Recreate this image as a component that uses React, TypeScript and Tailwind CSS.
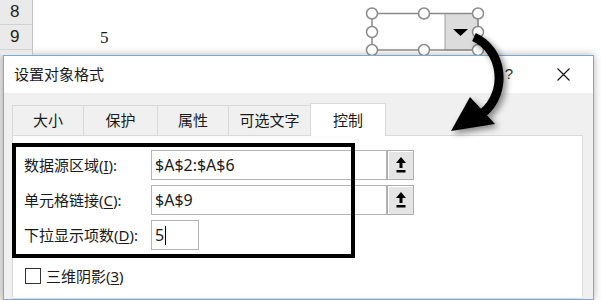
const cjk = "font-['Noto_Sans','Noto_Sans_CJK_SC',sans-serif]"

function Key({ k }: { k: string }) {
  return <span className="underline underline-offset-2">{k}</span>
}

function UploadButton() {
  return (
    <div className="flex h-[30px] w-[27px] items-center justify-center border border-[#adadad] bg-[#e5e5e5] shadow-[inset_1px_1px_0_#fff]">
      <svg width="10" height="16" viewBox="0 0 10 16">
        <polygon points="5,0 10,6 0,6" fill="#000" />
        <rect x="3.5" y="5" width="3" height="6" fill="#000" />
        <rect x="0.5" y="13" width="9" height="2.5" fill="#000" />
      </svg>
    </div>
  )
}

function Tab({ label, width, active }: { label: string; width: string; active?: boolean }) {
  return (
    <div
      className={`flex items-center justify-center border-[#d9d9d9] ${width} ${
        active
          ? 'relative z-10 -mb-px h-[33px] border-x border-t bg-white'
          : 'h-[30px] border-l border-t bg-[#f0f0f0]'
      }`}
    >
      {label}
    </div>
  )
}

export default function App() {
  return (
    <div className={`relative h-[300px] w-[601px] overflow-hidden bg-white text-[15px] text-[#1a1a1a] ${cjk}`}>
      {/* spreadsheet behind the dialog */}
      <div className="relative flex h-[55px] overflow-hidden">
        <div className="w-[33px] shrink-0 border-r border-[#c4c4c4] bg-[#eaeaea] font-['Liberation_Sans',sans-serif] text-[17px] text-[#222]">
          <div className="flex h-[25px] items-center border-b border-[#d2d2d2] pl-[10px]">8</div>
          <div className="flex h-[25px] items-center border-b border-[#d2d2d2] pl-[10px]">9</div>
          <div className="h-[5px]" />
        </div>
        <div className="flex-1 pt-[25px]">
          <div className="flex h-[25px] items-center pl-[67px] font-['Liberation_Serif',serif] text-[17px]">5</div>
        </div>
        {/* combo box form control, selected */}
        <svg className="absolute left-[360px] top-0" width="130" height="60" viewBox="360 0 130 60">
          <rect x="445" y="13.5" width="33" height="36.5" fill="#dcdcdc" stroke="#a0a0a0" />
          <polygon points="453,29 468,29 460.5,36" fill="#000" />
          <rect x="372" y="13.5" width="106" height="36.5" fill="none" stroke="#8a8a8a" strokeWidth="1.5" />
          {[
            [372, 13.5], [424, 13.5], [478, 13.5],
            [372, 32], [478, 32],
            [372, 50], [424, 50], [478, 50],
          ].map(([cx, cy], i) => (
            <circle key={i} cx={cx} cy={cy} r="5.5" fill="#fff" stroke="#8a8a8a" strokeWidth="1.5" />
          ))}
        </svg>
      </div>

      <div className="flex h-[245px]">
        <div className="w-[3px] shrink-0 bg-[#eaeaea]" />
        {/* dialog window */}
        <div className="flex w-[591px] flex-col border border-[#7fa9d4] shadow-[0_0_8px_rgba(0,0,0,0.3)]">
          <div className="flex h-[37px] shrink-0 items-center bg-white pl-[10px] pr-[23px]">
            <span>设置对象格式</span>
            <span className="ml-auto font-['Liberation_Sans',sans-serif] text-[15px] text-[#333]">?</span>
            <svg className="ml-[44px]" width="13" height="13" viewBox="0 0 13 13">
              <path d="M0.5 0.5 L12.5 12.5 M12.5 0.5 L0.5 12.5" stroke="#111" strokeWidth="1.1" />
            </svg>
          </div>
          <div className="flex flex-1 flex-col bg-[#f0f0f0] pl-[8px] pr-[10px] pt-[10px]">
            <div className="flex items-end">
              <Tab label="大小" width="w-[71px]" />
              <Tab label="保护" width="w-[74px]" />
              <Tab label="属性" width="w-[71px]" />
              <Tab label="可选文字" width="w-[82px]" />
              <Tab label="控制" width="w-[76px]" active />
            </div>
            <div className="relative flex-1 border border-[#d9d9d9] bg-white pl-[11px] pt-[14px]">
              <div className="mb-[5px] flex h-[30px] items-center">
                <div className="w-[127px]">
                  数据源区域(<Key k="I" />):
                </div>
                <div className="flex h-[30px] w-[236px] items-center border border-[#b4b4b4] pl-[3px] text-[16px]">$A$2:$A$6</div>
                <UploadButton />
              </div>
              <div className="mb-[5px] flex h-[30px] items-center">
                <div className="w-[127px]">
                  单元格链接(<Key k="C" />):
                </div>
                <div className="flex h-[30px] w-[236px] items-center border border-[#b4b4b4] pl-[3px] text-[16px]">$A$9</div>
                <UploadButton />
              </div>
              <div className="flex h-[30px] items-center">
                <div className="w-[127px]">
                  下拉显示项数(<Key k="D" />):
                </div>
                <div className="flex h-[30px] w-[48px] items-center border border-[#b4b4b4] pl-[3px] text-[16px]">
                  5<span className="ml-px h-[19px] w-px bg-black" />
                </div>
              </div>
              <div className="mt-[18px] flex h-[16px] items-center">
                <div className="ml-px mr-[5px] h-[16px] w-[16px] border border-[#333]" />
                <span>
                  三维阴影(<Key k="3" />)
                </span>
              </div>
              {/* highlight frame drawn over the screenshot */}
              <div className="absolute left-[-1px] top-[7px] h-[115px] w-[343px] border-4 border-black" />
            </div>
          </div>
        </div>
      </div>

      {/* annotation arrow */}
      <svg
        className="pointer-events-none absolute left-0 top-0 drop-shadow-[3px_3px_3px_rgba(0,0,0,0.45)]"
        width="601"
        height="300"
        viewBox="0 0 601 300"
      >
        <path d="M474 37 C503 50 508 92 483 113" fill="none" stroke="#000" strokeWidth="9" />
        <polygon points="451,131 470,97 495,124" fill="#000" />
      </svg>
    </div>
  )
}
